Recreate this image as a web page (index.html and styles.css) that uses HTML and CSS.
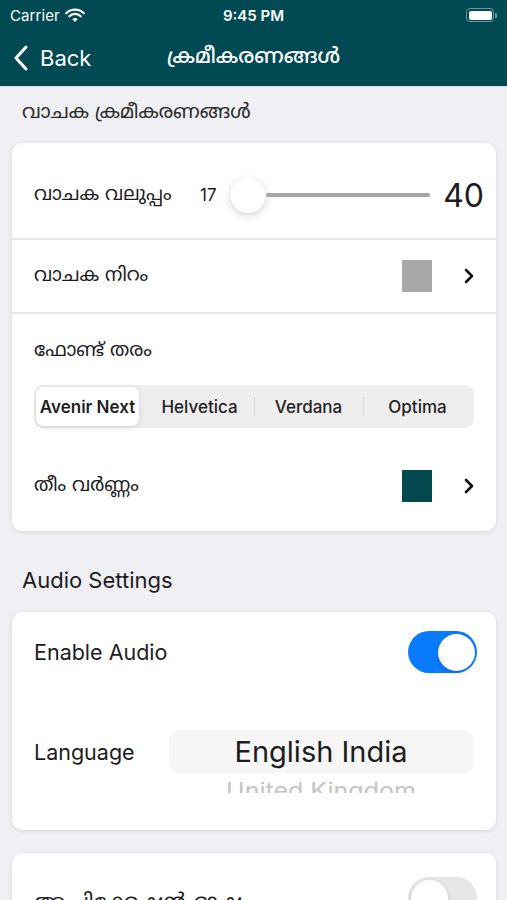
FILE: index.html
```html
<!DOCTYPE html>
<html lang="ml">
<head>
<meta charset="utf-8">
<link rel="stylesheet" href="styles.css">
</head>
<body>
<header class="topbar">
  <div class="status">
    <div class="status-left">
      <span class="carrier">Carrier</span>
      <svg class="wifi" width="20" height="15" viewBox="0 0 20 15"><path d="M1.2 5.2a12.5 12.5 0 0 1 17.6 0" fill="none" stroke="#fff" stroke-width="2.2" stroke-linecap="round"/><path d="M4.3 8.3a8 8 0 0 1 11.4 0" fill="none" stroke="#fff" stroke-width="2.2" stroke-linecap="round"/><path d="M7.3 11.2a3.7 3.7 0 0 1 5.4 0L10 14z" fill="#fff"/></svg>
    </div>
    <div class="time">9:45 PM</div>
    <div class="status-right">
      <span class="battery"><span class="battery-fill"></span></span><span class="battery-nub"></span>
    </div>
  </div>
  <nav class="navbar">
    <div class="back">
      <svg width="14" height="26" viewBox="0 0 14 26"><polyline points="12,2 2,13 12,24" fill="none" stroke="#fff" stroke-width="3" stroke-linecap="round" stroke-linejoin="round"/></svg>
      <span>Back</span>
    </div>
    <div class="title">ക്രമീകരണങ്ങൾ</div>
    <div></div>
  </nav>
</header>

<main class="content">
  <h2 class="section-title ml">വാചക ക്രമീകരണങ്ങൾ</h2>
  <section class="card">
    <div class="row row-slider">
      <span class="label ml">വാചക വലുപ്പം</span>
      <span class="min">17</span>
      <div class="slider">
        <span class="thumb"></span>
        <span class="track"></span>
      </div>
      <span class="max">40</span>
    </div>
    <div class="row row-link sep">
      <span class="label ml">വാചക നിറം</span>
      <span class="swatch swatch-gray"></span>
      <svg class="chev" width="10" height="16" viewBox="0 0 10 16"><polyline points="2,2 8,8 2,14" fill="none" stroke="#111" stroke-width="2.6" stroke-linecap="round" stroke-linejoin="round"/></svg>
    </div>
    <div class="font-block sep">
      <div class="label ml">ഫോണ്ട് തരം</div>
      <div class="segmented">
        <span class="seg selected">Avenir Next</span>
        <span class="seg">Helvetica</span>
        <span class="seg divided">Verdana</span>
        <span class="seg divided">Optima</span>
      </div>
    </div>
    <div class="row row-link">
      <span class="label ml">തീം വർണ്ണം</span>
      <span class="swatch swatch-teal"></span>
      <svg class="chev" width="10" height="16" viewBox="0 0 10 16"><polyline points="2,2 8,8 2,14" fill="none" stroke="#111" stroke-width="2.6" stroke-linecap="round" stroke-linejoin="round"/></svg>
    </div>
  </section>

  <h2 class="section-title audio-title">Audio Settings</h2>
  <section class="card card-audio">
    <div class="row row-toggle">
      <span class="label">Enable Audio</span>
      <span class="toggle on"><span class="knob"></span></span>
    </div>
    <div class="row row-lang">
      <span class="label">Language</span>
      <div class="picker">
        <div class="picker-band"></div>
        <div class="picker-item current">English India</div>
        <div class="picker-item next">United Kingdom</div>
      </div>
    </div>
  </section>

  <section class="card card-third">
    <div class="row row-toggle">
      <span class="label ml">ആപ്ലിക്കേഷൻ ഭാഷ</span>
      <span class="toggle"><span class="knob"></span></span>
    </div>
  </section>
</main>
</body>
</html>
```

FILE: styles.css
```css
* { box-sizing: border-box; }

html, body {
  margin: 0;
  padding: 0;
}

body {
  width: 507px;
  height: 900px;
  overflow: hidden;
  background: #efeff4;
  font-family: "Inter", "Noto Sans Malayalam", "Lohit Malayalam", "Manjari", "Noto Sans", sans-serif;
  color: #1c1c1e;
}

.ml {
  font-family: "Noto Sans Malayalam", "Lohit Malayalam", "Manjari", "Rachana", "Meera", "Noto Sans", sans-serif;
}

/* ---------- top bar ---------- */
.topbar {
  background: #014a53;
  color: #fff;
  border-bottom: 1px solid #d9dde0;
}

.status {
  height: 30px;
  display: grid;
  grid-template-columns: 1fr auto 1fr;
  align-items: center;
  padding: 0 10px;
}

.status-left {
  display: flex;
  align-items: center;
  gap: 5px;
}

.carrier {
  font-size: 15px;
  letter-spacing: 0.1px;
}

.time {
  font-size: 15px;
  font-weight: 600;
}

.status-right {
  display: flex;
  justify-content: flex-end;
  align-items: center;
}

.battery {
  width: 28px;
  height: 14px;
  border: 1.5px solid #6f9499;
  border-radius: 4px;
  padding: 1.5px;
  display: flex;
}

.battery-fill {
  flex: 1;
  background: #fff;
  border-radius: 2px;
}

.battery-nub {
  width: 2px;
  height: 5px;
  background: #6f9499;
  border-radius: 0 1px 1px 0;
  margin-left: 1px;
}

.navbar {
  height: 56px;
  display: grid;
  grid-template-columns: 1fr auto 1fr;
  align-items: center;
  padding: 0 14px;
}

.back {
  display: flex;
  align-items: center;
  gap: 12px;
  font-size: 22px;
}

.title {
  font-family: "Noto Sans Malayalam", "Lohit Malayalam", "Manjari", "Noto Sans", sans-serif;
  font-size: 21px;
  font-weight: 500;
}

/* ---------- content ---------- */
.content {
  padding: 0 11px 0 12px;
}

.section-title {
  margin: 14px 0 18px 10px;
  font-size: 19.5px;
  line-height: 24px;
  font-weight: 400;
  color: #2a2a2a;
}

.audio-title {
  font-family: "Inter", sans-serif;
  margin: 35px 0 18px 10px;
  font-size: 22px;
  line-height: 28px;
  color: #1c1c1e;
}

.card {
  background: #fff;
  border-radius: 10px;
  box-shadow: 0 1px 5px rgba(0, 0, 0, 0.10);
  padding-bottom: 8px;
}

.row {
  display: flex;
  align-items: center;
  padding: 0 22px 0 22px;
}

.sep {
  border-top: 2px solid #e6e6e9;
}

.label {
  font-size: 19px;
  color: #1c1c1e;
}

/* slider row */
.row-slider {
  height: 95px;
  padding-top: 9px;
  padding-right: 24px;
}

.row-slider .label {
  width: 166px;
}

.min {
  font-size: 17px;
  width: 30px;
}

.slider {
  flex: 1;
  display: flex;
  align-items: center;
}

.thumb {
  width: 36px;
  height: 36px;
  border-radius: 50%;
  background: #fff;
  box-shadow: 0 3px 8px rgba(0, 0, 0, 0.16), 0 0 1px rgba(0, 0, 0, 0.15);
  flex: none;
}

.track {
  flex: 1;
  height: 4px;
  border-radius: 2px;
  background: #a6a6a6;
}

.max {
  font-size: 32px;
  margin-left: 13px;
  margin-right: -12px;
}

/* link rows */
.row-link {
  height: 74px;
}

.row-link .label {
  flex: 1;
}

.swatch {
  width: 30px;
  height: 32px;
}

.swatch-gray { background: #a9a9a9; }
.swatch-teal { background: #03474f; }

.chev {
  margin-left: 32px;
}

/* font block */
.font-block {
  padding: 26px 22px 0 22px;
}

.font-block .label {
  line-height: 24px;
}

.segmented {
  margin-top: 21px;
  height: 43px;
  background: #eeeeef;
  border-radius: 9px;
  padding: 2px;
  display: grid;
  grid-template-columns: repeat(4, 1fr);
  align-items: center;
}

.seg {
  height: 100%;
  display: flex;
  align-items: center;
  justify-content: center;
  font-size: 17px;
  font-weight: 500;
  color: #1f1f1f;
  position: relative;
}

.seg.divided::before {
  content: "";
  position: absolute;
  left: 0;
  top: 10px;
  bottom: 10px;
  width: 1px;
  background: #d6d6d8;
}

.seg.selected {
  background: #fff;
  border-radius: 7px;
  font-weight: 600;
  margin-right: 6px;
  box-shadow: 0 2px 6px rgba(0, 0, 0, 0.10), 0 0 1px rgba(0, 0, 0, 0.1);
}

.font-block + .row-link {
  margin-top: 21px;
}

/* audio card */
.card-audio {
  padding-bottom: 0;
  height: 218px;
}

.row-toggle {
  height: 80px;
  justify-content: space-between;
  padding-right: 19px;
}

.row-toggle .label {
  font-size: 21.5px;
}

.toggle {
  width: 69px;
  height: 42px;
  border-radius: 21px;
  background: #e6e6e9;
  padding: 2.5px;
  display: flex;
  flex: none;
}

.toggle.on {
  background: #0a7aff;
  justify-content: flex-end;
}

.knob {
  width: 37px;
  height: 37px;
  border-radius: 50%;
  background: #fff;
  box-shadow: 0 2px 5px rgba(0, 0, 0, 0.15);
}

.row-lang {
  align-items: flex-start;
  padding-right: 23px;
}

.row-lang .label {
  font-size: 21.5px;
  width: 135px;
  margin-top: 47px;
}

.picker {
  flex: 1;
  height: 93px;
  margin-top: 8px;
  overflow: hidden;
  display: flex;
  flex-direction: column;
  align-items: center;
  padding-top: 30px;
  position: relative;
}

.picker-band {
  position: absolute;
  left: 0;
  right: 0;
  top: 30px;
  height: 43px;
  background: #f6f6f7;
  border-radius: 9px;
}

.picker-item {
  position: relative;
  height: 43px;
  flex: none;
  display: flex;
  align-items: center;
  justify-content: center;
}

.picker-item.current {
  font-size: 29px;
  color: #1c1c1e;
}

.picker-item.next {
  font-size: 25px;
  color: #c4c4c7;
  transform: scaleY(0.85);
  margin-top: -5px;
}

.card-third {
  margin-top: 23px;
}

.card-third .row-toggle {
  align-items: flex-start;
  padding-top: 24px;
}

.card-third .label {
  margin-top: 13px;
}
```
